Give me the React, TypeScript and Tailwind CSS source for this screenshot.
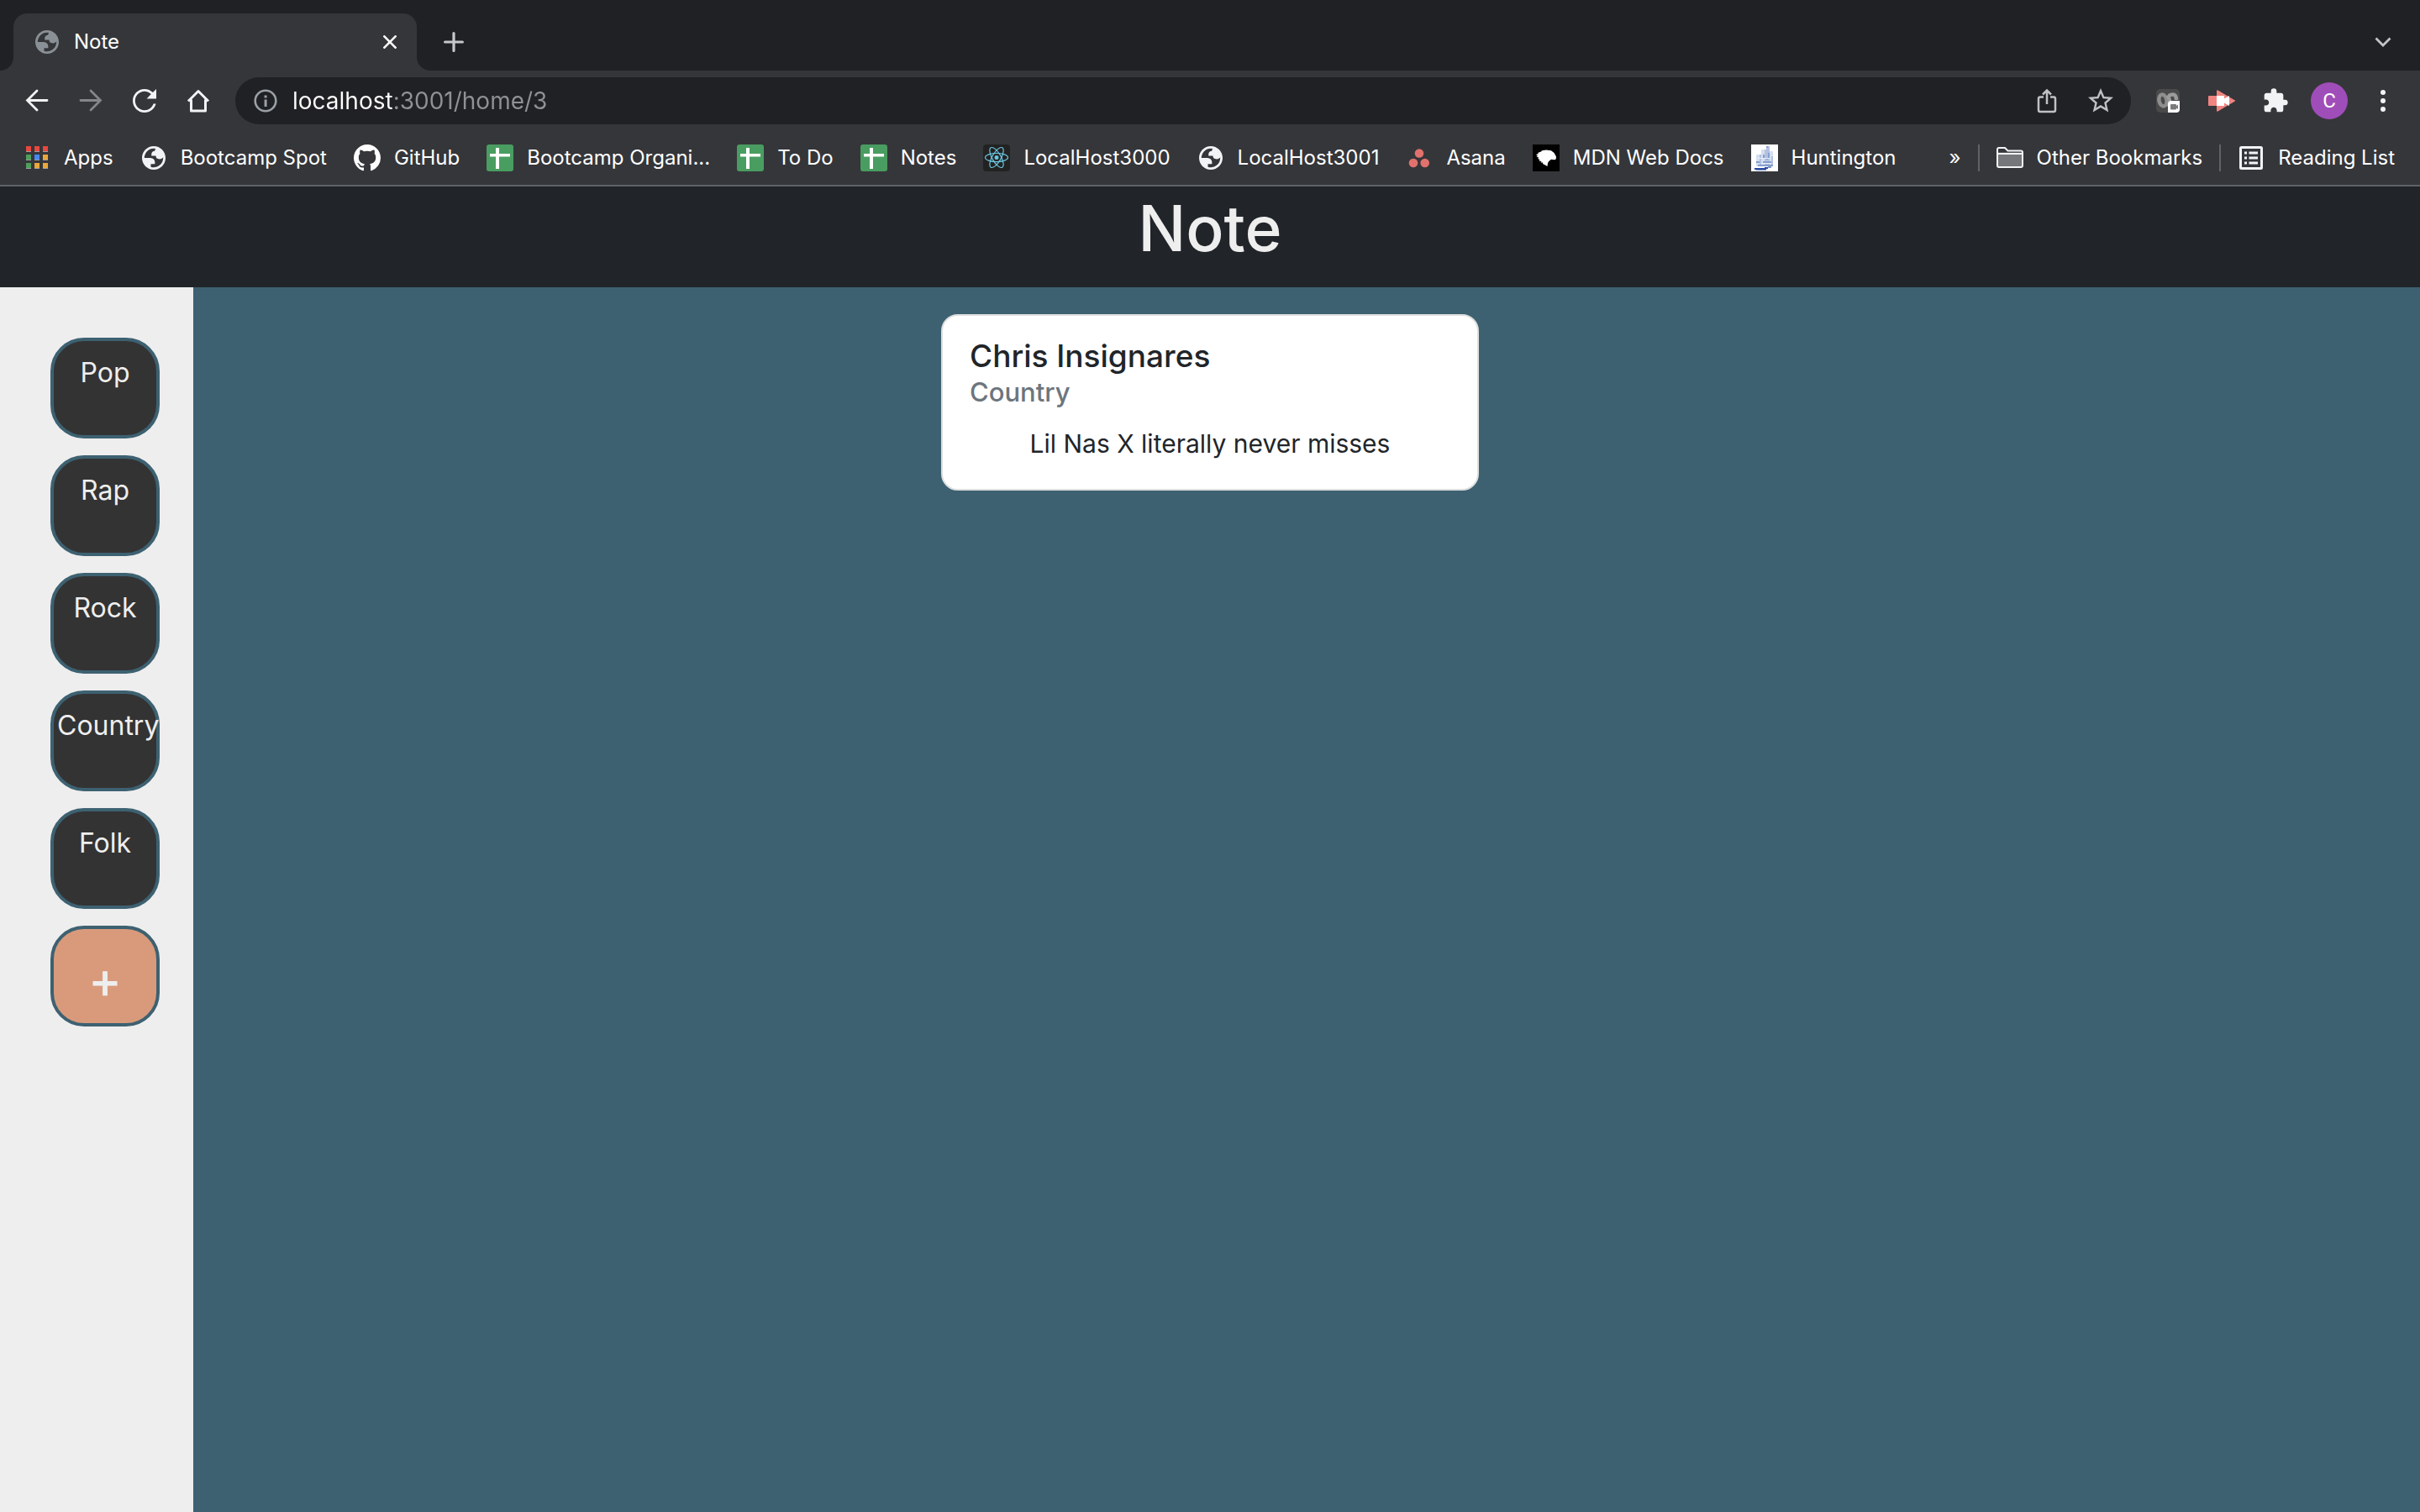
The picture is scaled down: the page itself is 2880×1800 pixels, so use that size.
import type { ReactNode } from "react";
import { MdExtension, MdStarBorder } from "react-icons/md";

function GlobeIcon({ className }: { className: string }) {
  return (
    <svg viewBox="2 2 20 20" className={className} fill="currentColor" aria-hidden="true">
      <path
        fillRule="evenodd"
        d="M12 2C6.48 2 2 6.48 2 12s4.48 10 10 10 10-4.48 10-10S17.52 2 12 2zM4 12h4.4c3.407.022 4.922 1.73 4.543 5.127H9.488v2.47a8.004 8.004 0 0 0 10.498-8.083C19.327 12.504 18.332 13 17 13c-2.137 0-3.206-.916-3.206-2.75h-3.748c-.274-2.728.683-4.092 2.87-4.092 0-.975.327-1.597.811-1.97A8.004 8.004 0 0 0 4 12z"
      />
    </svg>
  );
}

function AppsIcon() {
  const colors = ["#e8483f", "#e8483f", "#e8483f", "#4f9e5b", "#4688f1", "#e8a83a", "#4f9e5b", "#e8a83a", "#e8a83a"];
  return (
    <svg viewBox="0 0 32 32" className="size-8" aria-hidden="true">
      {colors.map((color, i) => (
        <g key={i}>
          <rect x={3 + (i % 3) * 10} y={2 + Math.floor(i / 3) * 10} width="6" height="7" fill="#9a9c9f" />
          <rect x={3 + (i % 3) * 10} y={2 + Math.floor(i / 3) * 10} width="6" height="6" fill={color} />
        </g>
      ))}
    </svg>
  );
}

function GithubIcon() {
  return (
    <svg viewBox="0 0 16 16" className="size-8 text-white" fill="currentColor" aria-hidden="true">
      <path d="M8 0C3.58 0 0 3.58 0 8c0 3.54 2.29 6.53 5.47 7.59.4.07.55-.17.55-.38 0-.19-.01-.82-.01-1.49-2.01.37-2.53-.49-2.69-.94-.09-.23-.48-.94-.82-1.13-.28-.15-.68-.52-.01-.53.63-.01 1.08.58 1.23.82.72 1.21 1.87.87 2.33.66.07-.52.28-.87.51-1.07-1.78-.2-3.64-.89-3.64-3.95 0-.87.31-1.59.82-2.15-.08-.2-.36-1.02.08-2.12 0 0 .67-.21 2.2.82.64-.18 1.32-.27 2-.27.68 0 1.36.09 2 .27 1.53-1.04 2.2-.82 2.2-.82.44 1.1.16 1.92.08 2.12.51.56.82 1.27.82 2.15 0 3.07-1.87 3.75-3.65 3.95.29.25.54.73.54 1.48 0 1.07-.01 1.93-.01 2.2 0 .21.15.46.55.38A8.013 8.013 0 0016 8c0-4.42-3.58-8-8-8z" />
    </svg>
  );
}

function SheetIcon() {
  return (
    <svg viewBox="0 0 32 32" className="size-8" aria-hidden="true">
      <rect width="32" height="32" rx="3" fill="#4a9d61" />
      <path d="M11 4h4v7h13v3.500H15V29h-4V14.500H4V11h7z" fill="#fff" />
    </svg>
  );
}

function ReactIcon() {
  return (
    <svg viewBox="0 0 32 32" className="size-8" aria-hidden="true">
      <rect width="32" height="32" rx="4" fill="#222222" />
      <g fill="none" stroke="#6cc5df" strokeWidth="1.2">
        <ellipse cx="16" cy="15.500" rx="13.500" ry="5.200" />
        <ellipse cx="16" cy="15.500" rx="13.500" ry="5.200" transform="rotate(60 16 15.500)" />
        <ellipse cx="16" cy="15.500" rx="13.500" ry="5.200" transform="rotate(120 16 15.500)" />
      </g>
      <circle cx="16" cy="15.500" r="2.500" fill="#6cc5df" />
    </svg>
  );
}

function AsanaIcon() {
  return (
    <svg viewBox="0 0 32 32" className="size-8" fill="#e2716d" aria-hidden="true">
      <circle cx="16" cy="10.500" r="5.300" />
      <circle cx="9" cy="22" r="5.300" />
      <circle cx="22.700" cy="22" r="5.300" />
    </svg>
  );
}

function MdnIcon() {
  return (
    <svg viewBox="0 0 32 32" className="size-8" aria-hidden="true">
      <rect width="32" height="32" fill="#000" />
      <path
        d="M4 12l3-1-1-1 4-1.500 1-1.200 5-.8 6 .8 3.500 2.700L28 14.500l-.3 3-1.700.7-4-.4-2.500 2L18 22l-.5 4-2.500-1.500-3-1.500.3-1.500-2.800 0 1-1.500-3-.5 1-1.500-2.500-1 1.500-1.300L4.500 14.500l1.500-1z"
        fill="#fff"
      />
    </svg>
  );
}

function ShipIcon() {
  return (
    <svg viewBox="0 0 32 32" className="size-8" shapeRendering="crispEdges" aria-hidden="true">
      <rect width="32" height="32" fill="#fff" />
      <path d="M6 12h4v14H6zM12 6h4v20h-4zM22 8h4v16h-4z" fill="#d5dff0" />
      <path d="M18 2h4v4h-4zM16 6h6v20h-6zM10 12h2v14h-2zM24 14h2v10h-2z" fill="#b3c2e0" />
      <path d="M18 2h2v2h-2zM14 12h2v4h-2zM20 10h2v6h-2zM6 20h4v2H6zM14 20h10v2H14zM18 16h2v2h-2zM8 24h16v2H8z" fill="#879fce" />
      <path d="M8 16h14v1H8zM12 22h12v1H12z" fill="#e9eff8" />
      <path d="M24 24h2v2h-2zM20 26h4v2h-4zM6 30h12v1H6z" fill="#7f97cb" />
      <path d="M4 28h14v2H4zM16 27h4v2h-4z" fill="#2c4aa0" />
    </svg>
  );
}

function FolderIcon() {
  return (
    <svg viewBox="0 0 32 32" className="size-8" aria-hidden="true">
      <path d="M1 9.500h30V25a2 2 0 0 1-2 2H3a2 2 0 0 1-2-2z" fill="#76777a" />
      <path
        d="M1 25V6a2 2 0 0 1 2-2h7l3.500 3.500H29a2 2 0 0 1 2 2V25a2 2 0 0 1-2 2H3a2 2 0 0 1-2-2zM1 11h30"
        fill="none"
        stroke="#f1f3f4"
        strokeWidth="2"
      />
    </svg>
  );
}

function ReadingListIcon() {
  return (
    <svg viewBox="0 0 32 32" className="size-8" aria-hidden="true">
      <rect x="3.500" y="3.500" width="25" height="25" rx="1" fill="none" stroke="#f1f3f4" strokeWidth="3" />
      <path d="M8 8.500h3v3H8zM8 14.500h3v3H8zM8 20.500h3v3H8zM13.500 8.500H24v3H13.500zM13.500 14.500H24v3H13.500zM13.500 20.500H24v3H13.500z" fill="#f1f3f4" />
    </svg>
  );
}

function NavButton({ label, children, className = "text-[#f1f3f4]" }: { label: string; children: ReactNode; className?: string }) {
  return (
    <button type="button" aria-label={label} className={`flex h-14 w-16 shrink-0 items-center justify-center ${className}`}>
      {children}
    </button>
  );
}

function Bookmark({ icon, label }: { icon: ReactNode; label: string }) {
  return (
    <a href="#" className="flex shrink-0 items-center gap-4 whitespace-nowrap">
      {icon}
      <span>{label}</span>
    </a>
  );
}

function TabStrip() {
  return (
    <div className="flex h-[84px] items-end bg-[#202124] pl-4">
      <div className="relative flex h-[68px] w-[480px] items-center rounded-t-2xl bg-[#35363a] pr-4 pl-[26px]">
        <svg viewBox="0 0 16 16" className="absolute bottom-0 -left-4 size-4" fill="#35363a" aria-hidden="true">
          <path d="M16 0v16H0A16 16 0 0 0 16 0z" />
        </svg>
        <svg viewBox="0 0 16 16" className="absolute -right-4 bottom-0 size-4" fill="#35363a" aria-hidden="true">
          <path d="M0 0v16h16A16 16 0 0 1 0 0z" />
        </svg>
        <GlobeIcon className="mr-[18px] size-7 text-[#8a9196]" />
        <span className="grow text-2xl text-white">Note</span>
        <button type="button" aria-label="Close tab" className="flex size-8 items-center justify-center text-white">
          <svg viewBox="0 0 16 16" className="size-4" stroke="currentColor" strokeWidth="2.600" aria-hidden="true">
            <path d="M0.500 0.500l15 15M15.500 0.500l-15 15" />
          </svg>
        </button>
      </div>
      <button type="button" aria-label="New tab" className="ml-5 flex h-[68px] w-12 items-center justify-center">
        <svg viewBox="0 0 24 24" className="size-6" stroke="#c6c8cb" strokeWidth="3.200" strokeLinecap="round" aria-hidden="true">
          <path d="M12 1.600v20.800M1.600 12h20.800" />
        </svg>
      </button>
      <button type="button" aria-label="Search tabs" className="mr-3 ml-auto flex h-[68px] w-16 items-center justify-center">
        <svg viewBox="0 0 20 12" className="h-3 w-5" fill="none" stroke="#c3c5c8" strokeWidth="2.800" aria-hidden="true">
          <path d="M1.500 1.500l8.500 8.500 8.500-8.500" />
        </svg>
      </button>
    </div>
  );
}

function Toolbar() {
  return (
    <div className="flex items-center px-3 py-2">
      <NavButton label="Back">
        <svg viewBox="0 0 28 28" className="size-7" fill="none" stroke="currentColor" strokeWidth="2.800" strokeLinecap="round" aria-hidden="true">
          <path d="M26 13.500H2.500M14 2L2.500 13.500 14 25" />
        </svg>
      </NavButton>
      <NavButton label="Forward" className="text-[#84868a]">
        <svg viewBox="0 0 28 28" className="size-7" fill="none" stroke="currentColor" strokeWidth="2.800" strokeLinecap="round" aria-hidden="true">
          <path d="M2 13.500h23.500M14 2l11.500 11.500L14 25" />
        </svg>
      </NavButton>
      <NavButton label="Reload">
        <svg viewBox="4 4 16 16" className="size-7" fill="currentColor" aria-hidden="true">
          <path d="M17.650 6.350C16.200 4.900 14.210 4 12 4c-4.420 0-7.990 3.580-7.990 8s3.570 8 7.990 8c3.730 0 6.840-2.550 7.730-6h-1.700c-.82 2.580-3.210 4.400-6.030 4.400-3.540 0-6.400-2.860-6.400-6.400s2.860-6.400 6.400-6.400c1.770 0 3.320.74 4.450 1.870L13.500 10.500H20V4z" />
        </svg>
      </NavButton>
      <NavButton label="Home">
        <svg viewBox="0 0 28 28" className="size-7" fill="none" stroke="currentColor" strokeWidth="3" aria-hidden="true">
          <path d="M2 14.500L14 2.500l12 12M5.500 12.500v13.500h17V12.500" strokeLinejoin="round" />
        </svg>
      </NavButton>
      <div className="mx-3 flex h-14 grow items-center rounded-full bg-[#202124] px-1">
        <NavButton label="View site information" className="text-[#9aa0a6]">
          <svg viewBox="0 0 28 28" className="size-7" aria-hidden="true">
            <circle cx="14" cy="14" r="12.300" fill="none" stroke="currentColor" strokeWidth="2.600" />
            <path d="M12.600 7.500h3v3h-3zM12.600 12.500h3V21h-3z" fill="currentColor" />
          </svg>
        </NavButton>
        <input
          type="text"
          aria-label="Address"
          defaultValue="localhost:3001/home/3"
          className="h-14 grow bg-linear-to-r from-white from-[120px] to-[#8f9194] to-[120px] bg-clip-text text-[28px] text-transparent outline-none"
        />
        <NavButton label="Share" className="text-[#bfc1c4]">
          <svg viewBox="0 0 24 30" className="h-[30px] w-6" fill="none" stroke="currentColor" strokeWidth="2.500" aria-hidden="true">
            <path d="M8 10.500H4A2 2 0 0 0 2 12.500V26a2 2 0 0 0 2 2h16a2 2 0 0 0 2-2V12.500a2 2 0 0 0-2-2h-4" />
            <path d="M12 19V3M7 7.500l5-5 5 5" />
          </svg>
        </NavButton>
        <NavButton label="Bookmark this tab" className="text-[#bfc1c4]">
          <MdStarBorder className="size-9" />
        </NavButton>
      </div>
      <NavButton label="Meeting extension">
        <svg viewBox="0 0 28 28" className="size-7" aria-hidden="true">
          <rect width="28" height="28" rx="5" fill="#4a4a4a" />
          <ellipse cx="8" cy="13.500" rx="4.500" ry="7" fill="none" stroke="#8e8e8e" strokeWidth="4.500" transform="rotate(-12 8 13.500)" />
          <path d="M13 8c3 2 4 7 2 13M15 8c5-3 9-2 9 5" fill="none" stroke="#9b9b9b" strokeWidth="4.500" />
          <path d="M18 14h10v10a4 4 0 0 1-4 4H14V18a4 4 0 0 1 4-4z" fill="#fff" />
          <path d="M18 18h5a1 1 0 0 1 1 1v1l2-1.500v5.500l-2-1.500v1a1 1 0 0 1-1 1h-5a1 1 0 0 1-1-1v-4.500a1 1 0 0 1 1-1z" fill="#7b7b7b" />
        </svg>
      </NavButton>
      <NavButton label="Screen recorder">
        <svg viewBox="0 0 32 28" className="h-7 w-8" aria-hidden="true">
          <path d="M1 8h9V2.500a1 1 0 0 1 1.500-1L31 13a1 1 0 0 1 0 2L11.500 26.500a1 1 0 0 1-1.500-1V20H1a1 1 0 0 1-1-1V9a1 1 0 0 1 1-1z" fill="#ef8480" />
          <path d="M10 8h8v0h1v3.500L25 8v12l-6-3.500V20h-9z" fill="#fff" />
        </svg>
      </NavButton>
      <NavButton label="Extensions">
        <MdExtension className="size-8" />
      </NavButton>
      <NavButton label="Profile">
        <span className="flex size-11 items-center justify-center rounded-full bg-[#9f4db8] font-[Roboto] text-2xl text-white">C</span>
      </NavButton>
      <NavButton label="Menu">
        <svg viewBox="0 0 6 26" className="h-[26px] w-1.5" fill="currentColor" aria-hidden="true">
          <circle cx="3" cy="3" r="3" />
          <circle cx="3" cy="13" r="3" />
          <circle cx="3" cy="23" r="3" />
        </svg>
      </NavButton>
    </div>
  );
}

function BookmarksBar() {
  return (
    <nav aria-label="Bookmarks" className="flex h-16 items-center gap-5 pr-[30px] pl-7 text-2xl text-white">
      <div className="flex grow items-center gap-8">
        <Bookmark icon={<AppsIcon />} label="Apps" />
        <Bookmark icon={<GlobeIcon className="mx-0.5 size-7 text-[#f1f3f4]" />} label="Bootcamp Spot" />
        <Bookmark icon={<GithubIcon />} label="GitHub" />
        <Bookmark icon={<SheetIcon />} label="Bootcamp Organi..." />
        <Bookmark icon={<SheetIcon />} label="To Do" />
        <Bookmark icon={<SheetIcon />} label="Notes" />
        <Bookmark icon={<ReactIcon />} label="LocalHost3000" />
        <Bookmark icon={<GlobeIcon className="mx-0.5 size-7 text-[#f1f3f4]" />} label="LocalHost3001" />
        <Bookmark icon={<AsanaIcon />} label="Asana" />
        <Bookmark icon={<MdnIcon />} label="MDN Web Docs" />
        <Bookmark icon={<ShipIcon />} label="Huntington" />
      </div>
      <button type="button" aria-label="More bookmarks">»</button>
      <div className="h-8 w-0.5 bg-[#5f6368]" />
      <Bookmark icon={<FolderIcon />} label="Other Bookmarks" />
      <div className="h-8 w-0.5 bg-[#5f6368]" />
      <Bookmark icon={<ReadingListIcon />} label="Reading List" />
    </nav>
  );
}

const genres = ["Pop", "Rap", "Rock", "Country", "Folk"];

export default function App() {
  return (
    <div className="flex min-h-screen flex-col bg-[#3d6171] font-[Inter,sans-serif]">
      <div className="border-b-2 border-[#5f6368] bg-[#35363a]">
        <TabStrip />
        <Toolbar />
        <BookmarksBar />
      </div>
      <header className="bg-[#212529] pb-5 text-center">
        <h1 className="text-[75px] leading-[100px] font-medium text-[#eeeeee]">Note</h1>
      </header>
      <div className="flex grow">
        <aside className="flex w-[230px] shrink-0 flex-col gap-5 bg-[#eeeeee] pt-15 pl-15">
          {genres.map((genre) => (
            <a
              key={genre}
              href="#"
              className="h-[120px] w-[130px] rounded-[40px] border-4 border-[#3d6171] bg-[#333333] px-1 pt-3.5 text-center text-[32px] leading-12 text-[#eeeeee]"
            >
              {genre}
            </a>
          ))}
          <button
            type="button"
            aria-label="Add genre"
            className="flex h-[120px] w-[130px] items-center justify-center rounded-[40px] border-4 border-[#3d6171] bg-[#d99a7b] pt-2 text-6xl font-medium text-[#eeeeee]"
          >
            +
          </button>
        </aside>
        <main className="grow pt-8 pr-[230px]">
          <article className="mx-auto w-[640px] rounded-[20px] border-2 border-[#dfdfdf] bg-white px-8 pt-6 pb-8 text-[#212529]">
            <h2 className="text-[37px] leading-12 font-medium">Chris Insignares</h2>
            <h3 className="text-[31px] leading-[38px] font-medium text-[#6c757d]">Country</h3>
            <p className="mt-5 text-center text-[30px] leading-11">Lil Nas X literally never misses</p>
          </article>
        </main>
      </div>
    </div>
  );
}
